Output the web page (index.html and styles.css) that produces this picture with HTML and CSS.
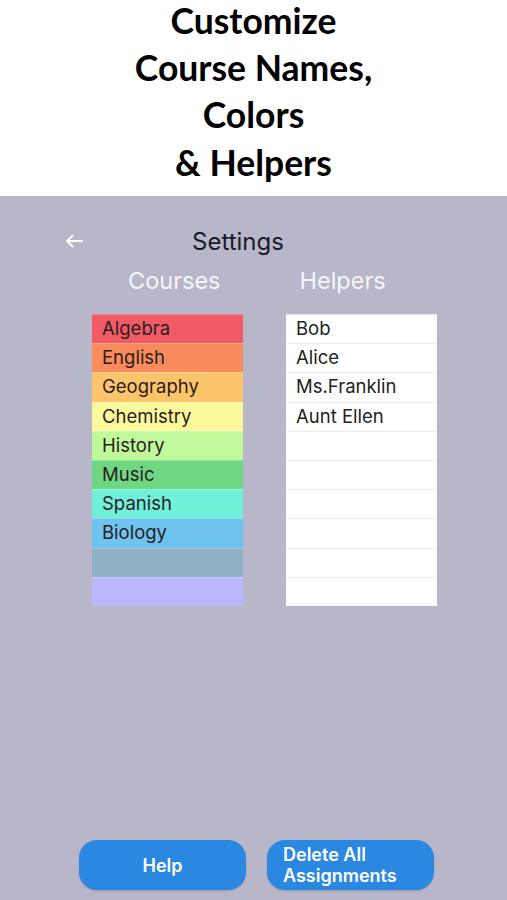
FILE: index.html
```html
<!DOCTYPE html>
<html>
<head>
<meta charset="utf-8">
<link rel="stylesheet" href="styles.css">
</head>
<body>
<div class="banner">
  <h1 class="banner-title"><span class="line line-first">Customize</span><span class="line">Course Names,</span><span class="line">Colors</span><span class="line">&amp; Helpers</span></h1>
</div>
<div class="screen">
  <div class="nav">
    <svg class="back" width="18" height="14" viewBox="0 0 18 14"><path d="M17 7H2M7.5 1.5L2 7l5.5 5.5" fill="none" stroke="#fff" stroke-width="1.8" stroke-linecap="round" stroke-linejoin="round"/></svg>
    <span class="nav-title">Settings</span>
  </div>
  <div class="labels">
    <span class="label label-courses">Courses</span>
    <span class="label label-helpers">Helpers</span>
  </div>
  <div class="lists">
    <div class="list courses">
      <div class="row c1">Algebra</div>
      <div class="row c2">English</div>
      <div class="row c3">Geography</div>
      <div class="row c4">Chemistry</div>
      <div class="row c5">History</div>
      <div class="row c6">Music</div>
      <div class="row c7">Spanish</div>
      <div class="row c8">Biology</div>
      <div class="row c9"></div>
      <div class="row c10"></div>
    </div>
    <div class="list helpers">
      <div class="row h">Bob</div>
      <div class="row h">Alice</div>
      <div class="row h">Ms.Franklin</div>
      <div class="row h">Aunt Ellen</div>
      <div class="row h"></div>
      <div class="row h"></div>
      <div class="row h"></div>
      <div class="row h"></div>
      <div class="row h"></div>
      <div class="row h"></div>
    </div>
  </div>
  <div class="spacer"></div>
  <div class="buttons">
    <button class="btn btn-center">Help</button>
    <button class="btn btn-left">Delete All<br>Assignments</button>
  </div>
</div>
</body>
</html>
```
FILE: styles.css
```css
* { box-sizing: border-box; }
html, body { margin: 0; padding: 0; }
body {
  width: 507px;
  height: 900px;
  overflow: hidden;
  background: #b8b6c9;
  font-family: Inter, "Noto Sans", sans-serif;
}
.banner {
  height: 196px;
  background: #fff;
  overflow: hidden;
}
.banner-title {
  margin: 0;
  font-family: Lato, sans-serif;
  font-weight: 700;
  font-size: 35.5px;
  line-height: 47.5px;
  text-align: center;
  color: #000;
}
.line { display: block; }
.line-first {
  line-height: 42px;
  margin-bottom: 1.5px;
}
.screen {
  height: 704px;
  display: flex;
  flex-direction: column;
}
.nav {
  display: flex;
  align-items: center;
  height: 30px;
  margin-top: 30px;
  padding-left: 65px;
}
.back { display: block; }
.nav-title {
  margin-left: 109px;
  font-size: 24px;
  color: #1b1a28;
}
.labels {
  display: flex;
  align-items: center;
  height: 30px;
  margin-top: 9px;
  padding-left: 128px;
}
.label {
  font-size: 23.5px;
  color: #f6f5fa;
}
.label-helpers { margin-left: 79px; }
.lists {
  display: flex;
  margin-top: 19px;
  padding-left: 92px;
  gap: 43px;
}
.list {
  width: 151px;
  display: flex;
  flex-direction: column;
}
.row {
  height: 29.2px;
  padding: 0 0 2px 10px;
  display: flex;
  align-items: center;
  font-size: 18.5px;
  color: #2b1d1f;
  border-top: 1px solid rgba(255,255,255,0.25);
}
.c1 { background: #f25b66; }
.c2 { background: #f98b5d; }
.c3 { background: #fdc56b; }
.c4 { background: #fcf99c; }
.c5 { background: #bff99c; }
.c6 { background: #6fd784; }
.c7 { background: #70f0d9; }
.c8 { background: #6ec4ef; }
.c9 { background: #8fb0c4; }
.c10 { background: #b9b8fd; }
.h {
  background: #fff;
  color: #222;
  border-top: 1px solid #ececf0;
}
.spacer { flex: 1; }
.buttons {
  display: flex;
  gap: 21px;
  padding-left: 79px;
  margin-bottom: 10px;
}
.btn {
  width: 167px;
  height: 50px;
  border: none;
  border-radius: 18px;
  background: #2a88e0;
  color: #fff;
  font-family: Inter, sans-serif;
  font-weight: 600;
  font-size: 18px;
  line-height: 21px;
  box-shadow: 0 1px 2px rgba(0,0,0,0.15);
}
.btn-center { text-align: center; }
.btn-left { text-align: left; padding-left: 16px; }
```
